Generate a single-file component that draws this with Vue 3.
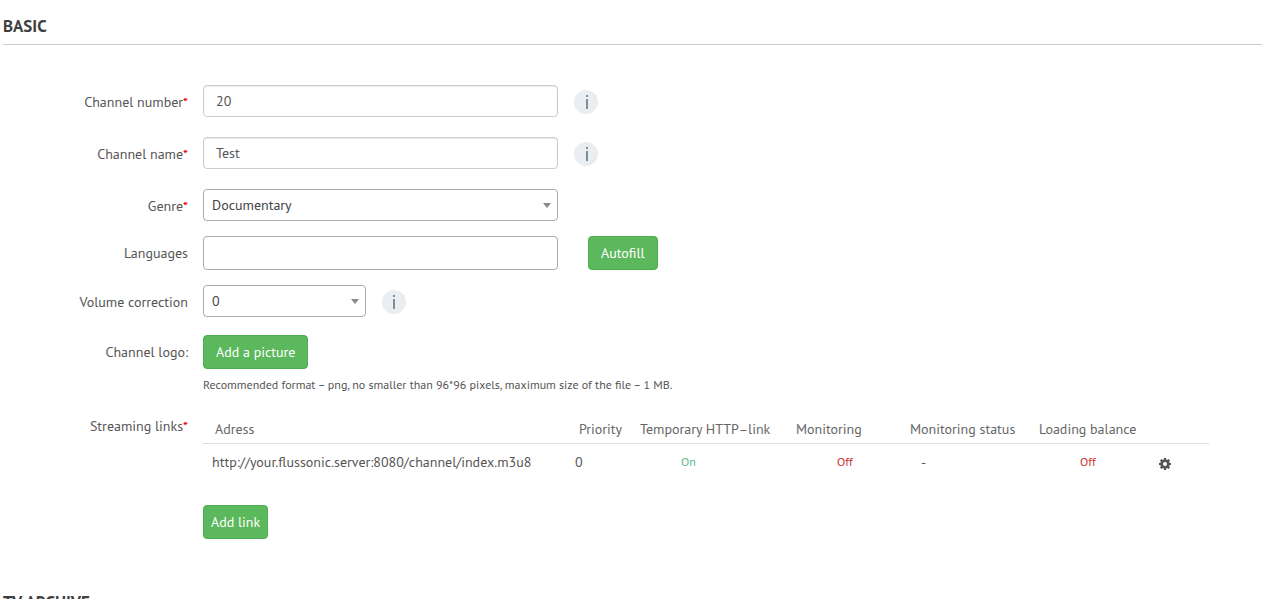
<script setup>
import { ref } from 'vue'

const channelNumber = ref('20')
const channelName = ref('Test')
const genre = ref('Documentary')
const languages = ref('')
const volume = ref('0')

const links = ref([
  {
    address: 'http://your.flussonic.server:8080/channel/index.m3u8',
    priority: 0,
    temporary: true,
    monitoring: false,
    status: '-',
    balance: false,
  },
])

const onOff = (value) => (value ? 'On' : 'Off')
</script>

<template>
  <main class="page">
    <section>
      <h2 class="section-title">BASIC</h2>
      <form class="form" @submit.prevent>
        <div class="row">
          <label class="label" for="number">Channel number<span class="required">*</span></label>
          <input id="number" v-model="channelNumber" class="field text" type="text" />
          <button class="info" type="button" aria-label="About channel number">
            <svg viewBox="0 0 24 24"><path d="M12 5h2v2h-2zM12 9h2v10h-2z" /></svg>
          </button>
        </div>
        <div class="row">
          <label class="label" for="name">Channel name<span class="required">*</span></label>
          <input id="name" v-model="channelName" class="field text" type="text" />
          <button class="info" type="button" aria-label="About channel name">
            <svg viewBox="0 0 24 24"><path d="M12 5h2v2h-2zM12 9h2v10h-2z" /></svg>
          </button>
        </div>
        <div class="row genre">
          <label class="label" for="genre">Genre<span class="required">*</span></label>
          <div class="dropdown">
            <select id="genre" v-model="genre" class="field select">
              <option>Documentary</option>
            </select>
          </div>
        </div>
        <div class="row languages">
          <label class="label" for="languages">Languages</label>
          <input id="languages" v-model="languages" class="field tags" type="text" />
          <button class="button autofill" type="button">Autofill</button>
        </div>
        <div class="row volume">
          <label class="label" for="volume">Volume correction</label>
          <div class="dropdown short">
            <select id="volume" v-model="volume" class="field select">
              <option>0</option>
            </select>
          </div>
          <button class="info" type="button" aria-label="About volume correction">
            <svg viewBox="0 0 24 24"><path d="M11 5h2v2h-2zM11 9h2v10h-2z" /></svg>
          </button>
        </div>
        <div class="row logo">
          <label class="label" for="logo">Channel logo:</label>
          <button id="logo" class="button" type="button">Add a picture</button>
        </div>
        <p class="hint">
          Recommended format – png, no smaller than 96*96 pixels, maximum size of the file – 1 MB.
        </p>
        <div class="row streams">
          <span id="streams" class="label">Streaming links<span class="required">*</span></span>
          <div class="stream-body">
            <table class="links" aria-labelledby="streams">
              <colgroup>
                <col />
                <col class="c-priority" />
                <col class="c-temporary" />
                <col class="c-monitoring" />
                <col class="c-status" />
                <col class="c-balance" />
                <col class="c-action" />
              </colgroup>
              <thead>
                <tr>
                  <th>Adress</th>
                  <th>Priority</th>
                  <th>Temporary HTTP–link</th>
                  <th>Monitoring</th>
                  <th>Monitoring status</th>
                  <th>Loading balance</th>
                  <th></th>
                </tr>
              </thead>
              <tbody>
                <tr v-for="link in links" :key="link.address">
                  <td class="address">{{ link.address }}</td>
                  <td>{{ link.priority }}</td>
                  <td class="flag" :class="{ on: link.temporary }">{{ onOff(link.temporary) }}</td>
                  <td class="flag" :class="{ on: link.monitoring }">{{ onOff(link.monitoring) }}</td>
                  <td class="status">{{ link.status }}</td>
                  <td class="flag" :class="{ on: link.balance }">{{ onOff(link.balance) }}</td>
                  <td class="action">
                    <button class="gear" type="button" aria-label="Link settings">
                      <svg viewBox="0 0 12 12">
                        <path
                          fill-rule="evenodd"
                          d="M5 0h2l.3 1.500 1 .4L9.600 1 11 2.400l-.9 1.300.4 1L12 5v2l-1.500.3-.4 1 .9 1.300L9.600 11l-1.300-.9-1 .4L7 12H5l-.3-1.500-1-.4-1.300.9L1 9.600l.9-1.300-.4-1L0 7V5l1.500-.3.4-1L1 2.400 2.400 1l1.300.9 1-.4zM6 4a2 2 0 1 0 0 4 2 2 0 0 0 0-4z"
                        />
                      </svg>
                    </button>
                  </td>
                </tr>
              </tbody>
            </table>
            <button class="button compact" type="button">Add link</button>
          </div>
        </div>
      </form>
    </section>
    <section>
      <h2 class="section-title">TV ARCHIVE</h2>
    </section>
  </main>
</template>

<style>
body {
  background: #fff;
}
</style>

<style scoped>
.page {
  box-sizing: border-box;
  height: 100vh;
  overflow: hidden;
  padding: 16px 0 0 3px;
  color: #555;
  font: 14px/20px 'PT Sans', 'Noto Sans', sans-serif;
}
.section-title {
  margin: 0;
  padding-bottom: 8px;
  border-bottom: 1px solid #ccc;
  color: #3f3f3f;
  font-size: 17px;
  font-weight: 700;
  line-height: 20px;
}
.form {
  padding: 40px 0 53px;
}
.row {
  display: flex;
  align-items: center;
  margin-bottom: 20px;
}
.genre {
  margin-bottom: 15px;
}
.languages {
  margin-bottom: 15px;
}
.volume {
  margin-bottom: 18px;
}
.logo {
  margin-bottom: 6px;
}
.label {
  flex: none;
  width: 185px;
  margin-right: 15px;
  padding-top: 2px;
  text-align: right;
}
.languages > .label,
.logo > .label,
.streams > .label {
  padding-top: 0;
}
.required {
  color: #f00;
}
.field {
  box-sizing: border-box;
  width: 355px;
  height: 32px;
  margin: 0;
  padding: 0 12px;
  border: 1px solid #ccc;
  border-radius: 4px;
  background: #fff;
  color: #555;
  font: inherit;
}
.text {
  box-shadow: inset 0 1px 1px rgba(0, 0, 0, 0.08);
}
.tags {
  height: 34px;
  border-color: #aaa;
}
.dropdown {
  position: relative;
  width: 355px;
}
.dropdown.short {
  width: 163px;
}
.dropdown::after {
  content: '';
  position: absolute;
  top: 14px;
  right: 7px;
  border: 4px solid transparent;
  border-top: 5px solid #888;
  border-bottom: 0;
  pointer-events: none;
}
.select {
  display: block;
  width: 100%;
  padding: 0 8px;
  border-color: #aaa;
  appearance: none;
  color: #444;
}
.info {
  width: 24px;
  height: 24px;
  margin: 1px 0 0 16px;
  padding: 0;
  border: 0;
  border-radius: 50%;
  background: #eaeef1;
}
.info svg {
  display: block;
  width: 24px;
  height: 24px;
  fill: #78909c;
}
.button {
  box-sizing: border-box;
  height: 34px;
  padding: 0 12px;
  border: 1px solid #4cae4c;
  border-radius: 4px;
  background: #5cb85c;
  color: #fff;
  font: inherit;
}
.autofill {
  margin-left: 30px;
}
.compact {
  padding: 0 7px;
}
.hint {
  margin: 0 0 21px 200px;
  font-size: 12px;
  line-height: 20px;
}
.streams {
  align-items: flex-start;
  margin-bottom: 0;
}
.stream-body {
  flex: 1;
  margin-right: 53px;
}
.links {
  width: 100%;
  margin-bottom: 25px;
  border-collapse: collapse;
  table-layout: fixed;
}
.c-priority {
  width: 61px;
}
.c-temporary {
  width: 156px;
}
.c-monitoring {
  width: 114px;
}
.c-status {
  width: 129px;
}
.c-balance {
  width: 120px;
}
.c-action {
  width: 62px;
}
th {
  padding: 3px 0 4px 12px;
  border-bottom: 1px solid #ddd;
  color: #666;
  font-weight: 400;
  text-align: left;
  white-space: nowrap;
}
td {
  height: 36px;
  padding: 0 0 0 8px;
}
.address {
  padding-left: 9px;
}
.flag {
  padding-left: 53px;
  color: #c9302c;
  font-size: 12px;
}
.flag.on {
  color: #5cb88a;
}
.status {
  padding-left: 23px;
}
.action {
  padding-left: 12px;
}
.gear {
  display: block;
  width: 12px;
  height: 12px;
  margin-top: 4px;
  padding: 0;
  border: 0;
  background: none;
}
.gear svg {
  display: block;
  width: 12px;
  height: 12px;
  fill: #555;
}
</style>
